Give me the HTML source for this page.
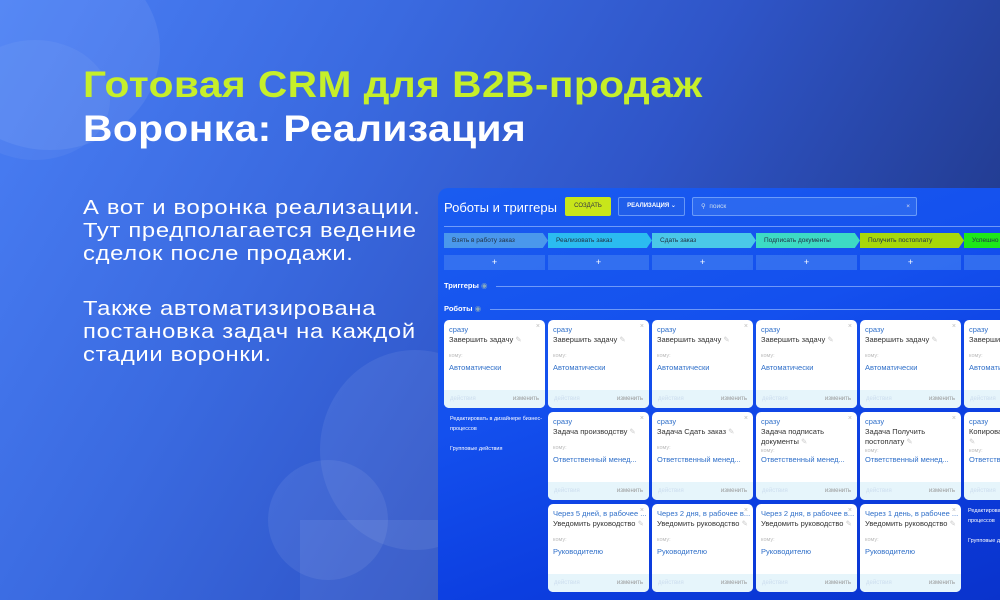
<!DOCTYPE html>
<html><head><meta charset="utf-8"><style>
*{margin:0;padding:0;box-sizing:border-box}
html,body{width:1000px;height:600px;overflow:hidden}
body{position:relative;font-family:"Liberation Sans","DejaVu Sans",sans-serif;
background:linear-gradient(120deg,#4a7ff5 0%,#3a6ae0 30%,#2f55c8 55%,#243f98 80%,#1b2e70 100%);}
.cloud{position:absolute;border-radius:50%;background:rgba(255,255,255,0.07)}
.h1{position:absolute;left:83px;top:64px;font-size:37px;font-weight:bold;color:#c6ef2a;white-space:nowrap;letter-spacing:0.4px;transform:scaleX(1.1);transform-origin:0 0}
.h2{position:absolute;left:83px;top:108px;font-size:37px;font-weight:bold;color:#fff;white-space:nowrap;letter-spacing:0.4px;transform:scaleX(1.1);transform-origin:0 0}
.body{position:absolute;left:83px;font-size:20.5px;color:#fff;line-height:23px;white-space:nowrap;letter-spacing:0.6px;transform:scaleX(1.16);transform-origin:0 0}
.panel{position:absolute;left:438px;top:188px;width:562px;height:412px;border-radius:10px 0 0 0;overflow:hidden;
background:linear-gradient(160deg,#1a5cf0 0%,#1450ee 40%,#0c3ee0 70%,#0a33cc 100%)}
.a{position:absolute}
.stage{position:absolute;top:45px;height:15px;font-size:6.5px;color:#234;padding-left:8px;line-height:15px;clip-path:polygon(0 0,95% 0,100% 50%,95% 100%,0 100%)}
.plus{position:absolute;top:67px;height:15px;width:101px;background:rgba(60,120,240,0.75);color:#fff;font-size:9px;text-align:center;line-height:15px}
.card{position:absolute;width:101px;height:88px;background:#fff;border-radius:5px;overflow:hidden;font-size:7.5px}
.card .t1{position:absolute;left:5px;top:5px;color:#2f6fc9;white-space:nowrap}
.card .t2{position:absolute;left:5px;top:15px;color:#333;line-height:10px;width:92px}
.card .k{position:absolute;left:5px;top:33px;color:#bbb;font-size:5.5px}
.card .as{position:absolute;left:5px;top:43px;color:#2f6fc9}
.card .x{position:absolute;right:5px;top:3px;color:#bbb;font-size:7px}
.card .f{position:absolute;left:0;right:0;bottom:0;height:18px;background:#e6f5fb}
.card .f span{position:absolute;right:6px;top:6px;font-size:6px;color:#999}
.card .f i{position:absolute;left:6px;top:6px;font-size:6px;color:#cde;font-style:normal}
.lnk{position:absolute;color:#fff;font-size:5.5px;line-height:10px}
</style></head><body>
<div class="cloud" style="left:-60px;top:-50px;width:220px;height:200px"></div>
<div class="cloud" style="left:-40px;top:40px;width:150px;height:120px;background:rgba(255,255,255,0.05)"></div>
<div class="cloud" style="left:320px;top:350px;width:190px;height:200px"></div>
<div class="cloud" style="left:268px;top:460px;width:120px;height:120px"></div>
<div class="a" style="left:300px;top:520px;width:140px;height:80px;background:rgba(255,255,255,0.07)"></div>

<div class="h1">Готовая CRM для B2B-продаж</div>
<div class="h2">Воронка: Реализация</div>
<div class="body" style="top:196px">А вот и воронка реализации.<br>Тут предполагается ведение<br>сделок после продажи.</div>
<div class="body" style="top:297px">Также автоматизирована<br>постановка задач на каждой<br>стадии воронки.</div>

<div class="panel">
 <div class="a" style="left:6px;top:12px;color:#fff;font-size:13px">Роботы и триггеры</div>
 <div class="a" style="left:127px;top:9px;width:46px;height:19px;background:#c8e61a;border-radius:2px;font-size:6px;color:#334;text-align:center;line-height:19px">СОЗДАТЬ</div>
 <div class="a" style="left:180px;top:9px;width:67px;height:19px;border:1px solid rgba(150,190,255,0.6);border-radius:2px;background:rgba(40,100,230,0.5);font-size:6px;color:#fff;font-weight:bold;text-align:center;line-height:17px">РЕАЛИЗАЦИЯ ⌄</div>
 <div class="a" style="left:254px;top:9px;width:225px;height:19px;border:1px solid rgba(150,190,255,0.6);border-radius:2px;background:rgba(60,120,240,0.55);font-size:6.5px;color:#cde;line-height:17px;padding-left:8px">⚲&nbsp;&nbsp;поиск<span style="position:absolute;right:6px;color:#dde">×</span></div>
 <div class="a" style="left:6px;top:38px;width:570px;height:1px;background:rgba(170,200,255,0.6)"></div>

 <div class="stage" style="left:6px;width:104px;background:#4a98ec">Взять в работу заказ</div>
 <div class="stage" style="left:110px;width:104px;background:#2bbcf0">Реализовать заказ</div>
 <div class="stage" style="left:214px;width:104px;background:#4ac8e8">Сдать заказ</div>
 <div class="stage" style="left:318px;width:104px;background:#3ddbc4">Подписать документы</div>
 <div class="stage" style="left:422px;width:104px;background:#a8d80a">Получить постоплату</div>
 <div class="stage" style="left:526px;width:104px;background:#1ee81a">Успешно</div>

 <div class="plus" style="left:6px">+</div><div class="plus" style="left:110px">+</div><div class="plus" style="left:214px">+</div><div class="plus" style="left:318px">+</div><div class="plus" style="left:422px">+</div><div class="plus" style="left:526px"></div>

 <div class="a" style="left:6px;top:93px;color:#fff;font-size:7.5px;font-weight:bold">Триггеры <span style="color:#8ab">◉</span></div>
 <div class="a" style="left:58px;top:98px;width:520px;height:1px;background:rgba(170,200,255,0.6)"></div>
 <div class="a" style="left:6px;top:116px;color:#fff;font-size:7.5px;font-weight:bold">Роботы <span style="color:#8ab">◉</span></div>
 <div class="a" style="left:52px;top:121px;width:526px;height:1px;background:rgba(170,200,255,0.6)"></div>

 <div class="card" style="left:6px;top:132px"><div class="t1">сразу</div><div class="x">×</div><div class="t2">Завершить задачу <span style="color:#ccc">✎</span></div><div class="k">кому:</div><div class="as">Автоматически</div><div class="f"><i>действия</i><span>изменить</span></div></div>
 <div class="card" style="left:110px;top:132px"><div class="t1">сразу</div><div class="x">×</div><div class="t2">Завершить задачу <span style="color:#ccc">✎</span></div><div class="k">кому:</div><div class="as">Автоматически</div><div class="f"><i>действия</i><span>изменить</span></div></div>
 <div class="card" style="left:214px;top:132px"><div class="t1">сразу</div><div class="x">×</div><div class="t2">Завершить задачу <span style="color:#ccc">✎</span></div><div class="k">кому:</div><div class="as">Автоматически</div><div class="f"><i>действия</i><span>изменить</span></div></div>
 <div class="card" style="left:318px;top:132px"><div class="t1">сразу</div><div class="x">×</div><div class="t2">Завершить задачу <span style="color:#ccc">✎</span></div><div class="k">кому:</div><div class="as">Автоматически</div><div class="f"><i>действия</i><span>изменить</span></div></div>
 <div class="card" style="left:422px;top:132px"><div class="t1">сразу</div><div class="x">×</div><div class="t2">Завершить задачу <span style="color:#ccc">✎</span></div><div class="k">кому:</div><div class="as">Автоматически</div><div class="f"><i>действия</i><span>изменить</span></div></div>
 <div class="card" style="left:526px;top:132px"><div class="t1">сразу</div><div class="x">×</div><div class="t2">Завершить задачу</div><div class="k">кому:</div><div class="as">Автоматически</div><div class="f"><i>действия</i><span>изменить</span></div></div>

 <div class="lnk" style="left:12px;top:226px">Редактировать в дизайнере бизнес-<br>процессов<br><br>Групповые действия</div>
 <div class="card" style="left:110px;top:224px"><div class="t1">сразу</div><div class="x">×</div><div class="t2">Задача производству <span style="color:#ccc">✎</span></div><div class="k">кому:</div><div class="as">Ответственный менед...</div><div class="f"><i>действия</i><span>изменить</span></div></div>
 <div class="card" style="left:214px;top:224px"><div class="t1">сразу</div><div class="x">×</div><div class="t2">Задача Сдать заказ <span style="color:#ccc">✎</span></div><div class="k">кому:</div><div class="as">Ответственный менед...</div><div class="f"><i>действия</i><span>изменить</span></div></div>
 <div class="card" style="left:318px;top:224px"><div class="t1">сразу</div><div class="x">×</div><div class="t2">Задача подписать документы <span style="color:#ccc">✎</span></div><div class="k" style="top:36px">кому:</div><div class="as">Ответственный менед...</div><div class="f"><i>действия</i><span>изменить</span></div></div>
 <div class="card" style="left:422px;top:224px"><div class="t1">сразу</div><div class="x">×</div><div class="t2">Задача Получить постоплату <span style="color:#ccc">✎</span></div><div class="k" style="top:36px">кому:</div><div class="as">Ответственный менед...</div><div class="f"><i>действия</i><span>изменить</span></div></div>
 <div class="card" style="left:526px;top:224px"><div class="t1">сразу</div><div class="x">×</div><div class="t2">Копировать<br><span style="color:#ccc">✎</span></div><div class="k" style="top:36px">кому:</div><div class="as">Ответственный</div><div class="f"><i>действия</i><span>изменить</span></div></div>

 <div class="card" style="left:110px;top:316px"><div class="t1">Через 5 дней, в рабочее ...</div><div class="x">×</div><div class="t2">Уведомить руководство <span style="color:#ccc">✎</span></div><div class="k">кому:</div><div class="as">Руководителю</div><div class="f"><i>действия</i><span>изменить</span></div></div>
 <div class="card" style="left:214px;top:316px"><div class="t1">Через 2 дня, в рабочее в...</div><div class="x">×</div><div class="t2">Уведомить руководство <span style="color:#ccc">✎</span></div><div class="k">кому:</div><div class="as">Руководителю</div><div class="f"><i>действия</i><span>изменить</span></div></div>
 <div class="card" style="left:318px;top:316px"><div class="t1">Через 2 дня, в рабочее в...</div><div class="x">×</div><div class="t2">Уведомить руководство <span style="color:#ccc">✎</span></div><div class="k">кому:</div><div class="as">Руководителю</div><div class="f"><i>действия</i><span>изменить</span></div></div>
 <div class="card" style="left:422px;top:316px"><div class="t1">Через 1 день, в рабочее ...</div><div class="x">×</div><div class="t2">Уведомить руководство <span style="color:#ccc">✎</span></div><div class="k">кому:</div><div class="as">Руководителю</div><div class="f"><i>действия</i><span>изменить</span></div></div>
 <div class="lnk" style="left:530px;top:318px;white-space:nowrap">Редактировать в дизайнере<br>процессов<br><br>Групповые действия</div>
</div>
</body></html>
